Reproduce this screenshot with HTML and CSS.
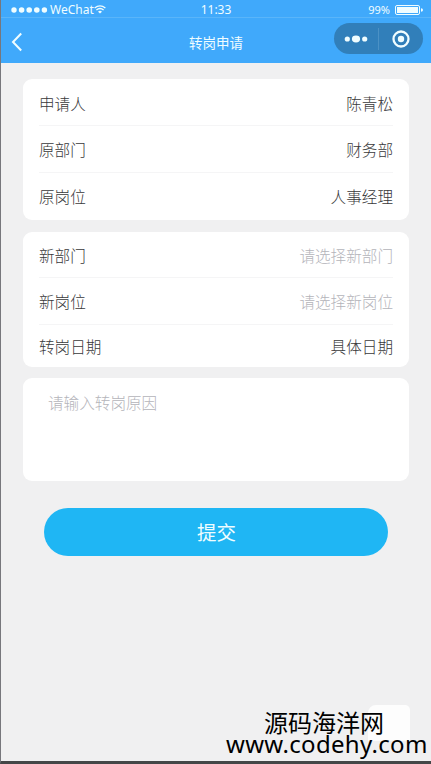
FILE: index.html
```html
<!DOCTYPE html>
<html lang="zh-CN">
<head>
<meta charset="utf-8">
<title>转岗申请</title>
<link rel="stylesheet" href="styles.css">
</head>
<body>
<div class="screen">
  <header class="header">
    <div class="status">
      <div class="carrier">
        <svg class="signal" width="37" height="6" viewBox="0 0 37 6" fill="currentColor"><circle cx="3" cy="3" r="2.7"/><circle cx="10.6" cy="3" r="2.8"/><circle cx="18.2" cy="3" r="2.8"/><circle cx="25.8" cy="3" r="2.8"/><circle cx="33.4" cy="3" r="2.7"/></svg>
        <span class="carrier-name">WeChat</span>
        <svg width="12" height="9" viewBox="0 0 12 9" fill="none" stroke="currentColor" stroke-width="1.3"><path d="M.6 3Q6-1.4 11.4 3M2.4 5.1Q6 2 9.6 5.1"/><path d="M4 6.7Q6 5 8 6.7L6 8.5Z" fill="currentColor" stroke="none"/></svg>
      </div>
      <span class="time">11:33</span>
      <div class="power">
        <span>99%</span>
        <svg width="29" height="10" viewBox="0 0 29 10"><rect x=".5" y=".5" width="24" height="9" rx="1.5" fill="none" stroke="currentColor"/><rect x="2" y="2" width="21" height="6" fill="currentColor"/><path d="M26 3.2q2 .2 2 1.8t-2 1.8z" fill="currentColor"/></svg>
      </div>
    </div>
    <div class="nav">
      <svg class="back" width="12" height="20" viewBox="0 0 12 20" fill="none" stroke="currentColor" stroke-width="2"><path d="M10.2 1.5 2 10l8.2 8.5"/></svg>
      <h1 class="title">转岗申请</h1>
      <div class="capsule">
        <svg width="24" height="8" viewBox="0 0 24 8" fill="currentColor"><circle cx="3.3" cy="4" r="2.6"/><ellipse cx="12" cy="4" rx="4.1" ry="3.4"/><circle cx="20.7" cy="4" r="2.6"/></svg>
        <i class="capsule-line"></i>
        <svg width="18" height="18" viewBox="0 0 18 18"><circle cx="9" cy="9" r="7.5" fill="none" stroke="currentColor" stroke-width="2.3"/><circle cx="9" cy="9" r="3.2" fill="currentColor"/></svg>
      </div>
    </div>
  </header>
  <main class="form">
    <section class="card current">
      <div class="row"><span>申请人</span><span>陈青松</span></div>
      <div class="row"><span>原部门</span><span>财务部</span></div>
      <div class="row"><span>原岗位</span><span>人事经理</span></div>
    </section>
    <section class="card target">
      <div class="row"><span>新部门</span><span class="hint">请选择新部门</span></div>
      <div class="row"><span>新岗位</span><span class="hint">请选择新岗位</span></div>
      <div class="row"><span>转岗日期</span><span>具体日期</span></div>
    </section>
    <section class="card reason hint">请输入转岗原因</section>
    <button class="submit" type="button">提交</button>
  </main>
  <div class="patch"></div>
  <div class="watermark"><span class="site-name">源码海洋网</span><span class="site-url">www.codehy.com</span></div>
</div>
</body>
</html>
```
FILE: styles.css
```css
* { box-sizing: border-box; }

body {
  margin: 0;
  font-family: "Noto Sans", "Noto Sans CJK SC", sans-serif;
}

.screen {
  position: relative;
  height: 764px;
  overflow: hidden;
  background: #f0f0f1;
  border-left: 1px solid #77777c;
  border-bottom: 3px solid #444647;
}

.header {
  height: 63px;
  background: #40a9fb;
  color: #f0fdff;
}

.status {
  display: grid;
  grid-template-columns: 1fr auto 1fr;
  align-items: center;
  height: 18px;
  padding: 1px 7px 0 10px;
  border-bottom: 1px solid #59b5fa;
  font-size: 12px;
  line-height: 16px;
}

.carrier, .power { display: flex; align-items: center; }
.carrier-name { margin-left: 2px; }
.signal { flex: none; }
.time { margin-right: 3px; padding-top: 1px; }
.power { justify-content: flex-end; gap: 5px; font-size: 11px; }

.nav {
  display: grid;
  grid-template-columns: 1fr auto 1fr;
  align-items: center;
  height: 45px;
  padding: 0 8px 0 10px;
}

.title {
  margin: 4px 2px 0 0;
  font-size: 13.5px;
  line-height: 20px;
  font-weight: 400;
}

.back { margin-top: 3px; }

.capsule {
  display: flex;
  align-items: center;
  justify-content: space-between;
  justify-self: end;
  width: 89px;
  height: 31px;
  margin-bottom: 4px;
  padding: 0 13px 0 10px;
  border-radius: 16px;
  background: #317fba;
}

.capsule-line { width: 1px; height: 22px; margin-right: 3px; background: #4b91c5; }

.form {
  display: flex;
  flex-direction: column;
  padding: 16px 22px 0;
}

.card {
  border-radius: 9px;
  background: #fff;
  color: #38383a;
  font-size: 15.6px;
  font-weight: 300;
  font-family: "Noto Sans CJK SC", sans-serif;
}

.current {
  display: grid;
  grid-template-rows: 47px 47px 47px;
  height: 141px;
  padding: 0 16px;
}

.target {
  display: grid;
  grid-template-rows: 46px 47px 42px;
  height: 135px;
  margin-top: 12px;
  padding: 0 16px;
}

.row {
  display: flex;
  align-items: center;
  justify-content: space-between;
  border-bottom: 1px solid #f5f5f6;
}

.row:last-child { border-bottom: 0; }
.current .row:first-child { padding-top: 2px; }
.current .row:last-child { padding-bottom: 2px; }

.card .hint, .reason.hint { color: #b4b4ba; }

.reason {
  height: 103px;
  margin-top: 11px;
  padding: 13px 25px;
  line-height: 22px;
}

.submit {
  width: 344px;
  height: 48px;
  margin: 27px 0 0 21px;
  padding: 0 0 1px 1px;
  border: 0;
  border-radius: 24px;
  background: #1fb6f4;
  color: #effdff;
  font-size: 19.5px;
  font-family: "Noto Sans CJK SC", sans-serif;
}

.patch {
  position: absolute;
  left: 367px;
  top: 705px;
  width: 42px;
  height: 36px;
  border-radius: 8px 5px 0 0;
  background: #fdfdfd;
}

.watermark {
  position: absolute;
  left: 225px;
  top: 710px;
  width: 202px;
  color: #000;
}

.site-name, .site-url { display: block; white-space: nowrap; }

.site-name {
  margin-left: 38px;
  font: 24px/24px "Noto Sans CJK SC", sans-serif;
}

.site-url {
  font: 24px/20px "Noto Sans", sans-serif;
  letter-spacing: 0.3px;
}
```
